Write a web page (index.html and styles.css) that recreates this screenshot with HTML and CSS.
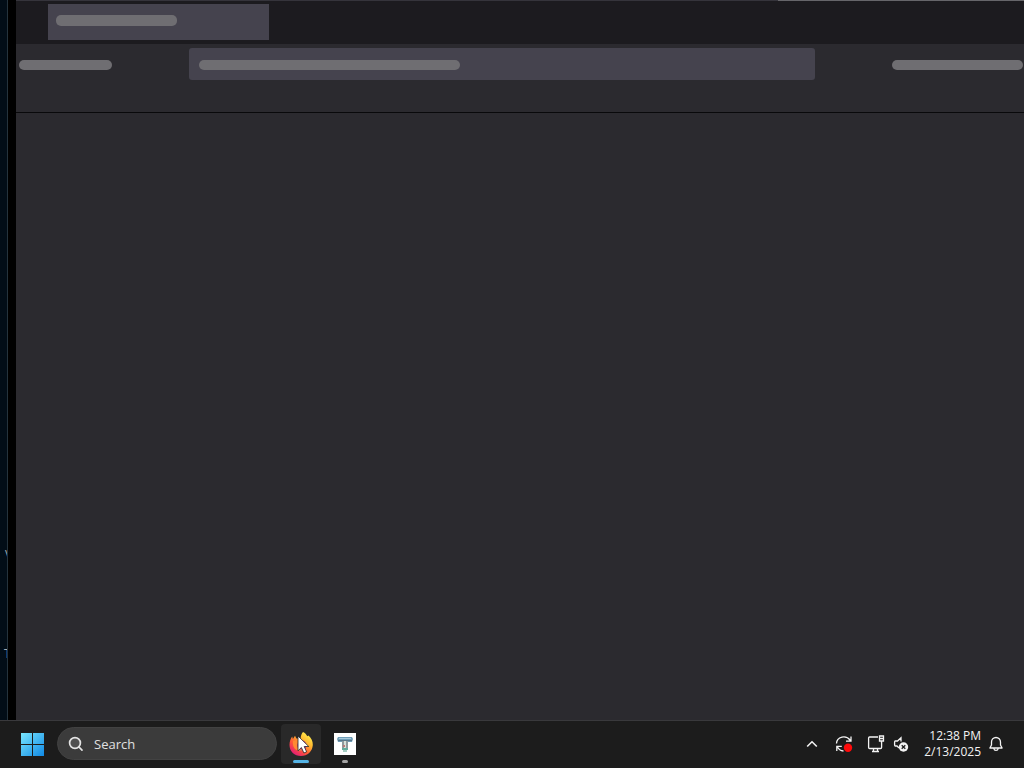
FILE: index.html
```html
<!DOCTYPE html>
<html lang="en">
<head>
<meta charset="utf-8">
<title>Desktop</title>
<link rel="stylesheet" href="styles.css">
</head>
<body>
<main class="desktop">
  <div class="wallpaper">
    <span class="desktop-label label-upper">V</span>
    <span class="desktop-label label-lower">T</span>
  </div>
  <section class="window" aria-label="Browser loading">
    <div class="tabstrip">
      <div class="tab"><span class="placeholder tab-title"></span></div>
    </div>
    <div class="toolbar">
      <span class="placeholder nav-tools"></span>
      <div class="urlbar"><span class="placeholder address"></span></div>
      <span class="placeholder menu-tools"></span>
    </div>
    <div class="bookmarks"></div>
    <div class="content"></div>
  </section>
</main>
<footer class="taskbar">
  <div class="launch">
    <button class="start" aria-label="Start">
      <svg width="24" height="24" viewBox="0 0 24 24">
        <defs><linearGradient id="win" x1="0" y1="0" x2="24" y2="24" gradientUnits="userSpaceOnUse"><stop stop-color="#7deaff"/><stop offset="1" stop-color="#1089e5"/></linearGradient></defs>
        <path fill="url(#win)" d="M1 1h11v11H1zM13 1h11v11H13zM1 13h11v11H1zM13 13h11v11H13z"/>
      </svg>
    </button>
    <label class="search">
      <svg width="16" height="16" viewBox="0 0 16 16" fill="none" stroke="#e4e4e4" stroke-width="1.700" stroke-linecap="round"><circle cx="7" cy="7" r="5.400" fill="#505050"/><path d="M11 11l3 3.200"/></svg>
      <input type="text" placeholder="Search" aria-label="Search">
    </label>
    <button class="app active" aria-label="Firefox">
      <svg width="24" height="24" viewBox="0 0 24 24">
        <defs>
          <linearGradient id="fire" x1="20" y1="2" x2="5" y2="22" gradientUnits="userSpaceOnUse"><stop stop-color="#fff04d"/><stop offset=".35" stop-color="#ffb52e"/><stop offset=".65" stop-color="#ff5a36"/><stop offset="1" stop-color="#e51e73"/></linearGradient>
        </defs>
        <path fill="url(#fire)" d="M14 0c2 1 3.500 2.500 4.200 4.300l1.300-.9c2.700 2.300 4.500 5.500 4.300 9.600C23.400 19.500 18.500 24 12 24S.5 19.400.5 13c0-3.300 1-6.300 2.700-8.500L3.900 7 6 3.700l1.400 2.700 4.200.2C11.700 4 12.500 1.500 14 0z"/>
        <circle cx="12" cy="13.500" r="5.500" fill="#b93589"/>
        <path fill="#ff8a32" d="M4 9c3-1.500 6-.5 8 1.300-2.500-.1-4 1-3.800 3.400.3 3 3.500 4.600 6.200 3.200-1.500 3-8 2.500-9.700-1.800C4 13.200 3.700 11 4 9z"/>
      </svg>
      <svg class="pointer" width="13" height="19" viewBox="0 0 13 19"><path d="M1 1v14.800l3.400-3.300 2.500 5.500 2.700-1.200-2.400-5.300h4.600z" fill="#fff" stroke="#252525" stroke-width=".8"/></svg>
    </button>
    <button class="app" aria-label="Terminal app">
      <svg width="24" height="24" viewBox="0 0 24 24">
        <path fill="#fff" d="M1 1h22v22H1z"/>
        <path fill="#6e9db7" d="M5 5h14l1 2-1 3H5L4 7z"/><path fill="#a9cadb" d="M6 6h12v1H6z"/><path fill="#597588" d="M5 8h14v1H5z"/>
        <path fill="#8f989c" d="M9 9h6v7H9z"/><path fill="#d8ded8" d="M11 9h2v7h-2z"/><path fill="#b87978" d="M10 13h2v2h-2z"/><path fill="#63aa9b" d="M9 16h6v2H9z"/><path fill="#a5cec3" d="M10 18h4v2h-4z"/>
      </svg>
    </button>
  </div>
  <div class="tray">
    <button class="tray-button chevron" aria-label="Show hidden icons"><svg width="12" height="12" viewBox="0 0 12 12" fill="none" stroke="#f3f3f3" stroke-width="1.600"><path d="M1.200 8.500L6 3.800l4.800 4.700"/></svg></button>
    <button class="tray-button update" aria-label="Updates">
      <svg width="18" height="18" viewBox="0 0 18 18" fill="none" stroke="#f3f3f3" stroke-width="1.300"><path d="M1.500 8.500C1.800 1.500 11-.5 15.300 5.300M16 1.500v4.700h-5M1.800 16v-4.700h5M2.300 11.800c1.200 2.500 3.500 4 6.200 4.200"/><circle cx="13" cy="12.800" r="4.200" fill="#ff0b0b" stroke="none"/></svg>
    </button>
    <button class="tray-button network" aria-label="Network and volume">
      <svg width="18" height="18" viewBox="0 0 18 18" fill="none" stroke="#f3f3f3" stroke-width="1.300"><path d="M11 2H2.600Q1.600 2 1.600 3v9.500q0 1 1 1h11q1 0 1-1V7M5 16.500h7M6.500 13.500v3M10.500 13.500v3M12.500 1h4v5h-4zM14.500 6v2M12.500 3.500h4"/></svg>
      <svg width="18" height="18" viewBox="0 0 18 18" fill="none" stroke="#f3f3f3" stroke-width="1.300"><path d="M9 6.500V2.800L5.500 6H3.200Q2.600 6 2.600 7v3q0 1 .8 1H5l2 2"/><circle cx="11.500" cy="12" r="4.700" fill="#f3f3f3" stroke="none"/><path stroke="#1c1c1c" d="M9.700 10.200l3.600 3.600M13.300 10.200l-3.600 3.600"/></svg>
    </button>
    <button class="clock"><time datetime="2025-02-13T12:38">12:38 PM<br>2/13/2025</time></button>
    <button class="tray-button bell" aria-label="Notifications"><svg width="16" height="16" viewBox="0 0 16 16" fill="none" stroke="#f3f3f3" stroke-width="1.300" stroke-linejoin="round"><path d="M3.500 9V6a4.500 4.500 0 0 1 9 0v3l1.600 3H1.900zM5.800 12.500c.4 2.600 4 2.600 4.400 0"/></svg></button>
  </div>
</footer>
</body>
</html>
```
FILE: styles.css
```css
* { box-sizing: border-box; }
body {
  display: flex;
  flex-direction: column;
  min-height: 100vh;
  margin: 0;
  overflow: hidden;
  background: #1c1c1c;
  color: #f3f3f3;
  font-family: "Open Sans", "Noto Sans", sans-serif;
}
button {
  display: flex;
  align-items: center;
  justify-content: center;
  padding: 0;
  border: 0;
  background: none;
  color: inherit;
  font: inherit;
}
svg { display: block; flex: none; }
.desktop { display: flex; flex: 1; }
.wallpaper {
  position: relative;
  width: 8px;
  overflow: hidden;
  border-right: 1px solid #25333d;
  background: #020d17;
}
.desktop-label {
  position: absolute;
  left: 5px;
  color: #a5abaf;
  font-size: 12px;
  line-height: 16px;
}
.label-upper { top: 547px; }
.label-lower { left: 4px; top: 646px; }
.window {
  display: flex;
  flex: 1;
  flex-direction: column;
  min-width: 0;
  border-left: 8px solid #000;
  background: #2b2a2f;
}
.tabstrip {
  height: 44px;
  padding: 4px 32px;
  background: linear-gradient(90deg, #35343b 0 calc(100% - 246px), #66666a calc(100% - 246px)) top / 100% 1px no-repeat #1c1b1f;
}
.tab {
  width: 221px;
  height: 36px;
  padding: 11px 8px;
  background: #45434e;
}
.placeholder {
  display: block;
  height: 10px;
  border-radius: 5px;
  background: #6f6e72;
}
.tab-title { width: 121px; height: 11px; }
.toolbar {
  display: flex;
  align-items: center;
  height: 40px;
  padding: 0 1px 0 3px;
}
.nav-tools, .menu-tools { margin-top: 2px; }
.nav-tools { width: 93px; margin-right: 77px; }
.urlbar {
  flex: 1;
  height: 32px;
  padding: 12px 10px;
  border-radius: 3px;
  background: #45434e;
}
.address { width: 261px; }
.menu-tools { width: 131px; margin-left: 77px; }
.bookmarks { height: 29px; border-bottom: 1px solid #09090b; }
.content { flex: 1; }
.taskbar {
  display: flex;
  align-items: center;
  justify-content: space-between;
  height: 48px;
  padding: 0 20px 2px;
  border-top: 1px solid #39393c;
}
.launch, .tray { display: flex; align-items: center; }
.start { margin-right: 13px; }
.search {
  display: flex;
  align-items: center;
  gap: 10px;
  width: 220px;
  height: 33px;
  padding: 0 10px;
  border: 1px solid #424242;
  border-radius: 17px;
  background: #3b3b3b;
}
.search input {
  flex: 1;
  min-width: 0;
  padding: 0;
  border: 0;
  outline: 0;
  background: transparent;
  color: #e0e0e0;
  font: 13px "Open Sans", sans-serif;
}
.search input::placeholder { color: #e0e0e0; opacity: 1; }
.app {
  position: relative;
  width: 40px;
  height: 40px;
  margin-left: 4px;
  border-radius: 4px;
}
.app.active { background: #292929; }
.app::after {
  content: "";
  position: absolute;
  bottom: 1px;
  width: 6px;
  height: 3px;
  border-radius: 2px;
  background: #a5a5a5;
}
.app.active::after { width: 16px; background: #55b4e6; }
.pointer { position: absolute; left: 16px; top: 11px; }
.chevron { margin-right: 17px; }
.update { margin-right: 14px; }
.network { gap: 7px; margin-right: 14px; }
.clock {
  margin-right: 7px;
  font-size: 12px;
  line-height: 16px;
  text-align: right;
}
```
